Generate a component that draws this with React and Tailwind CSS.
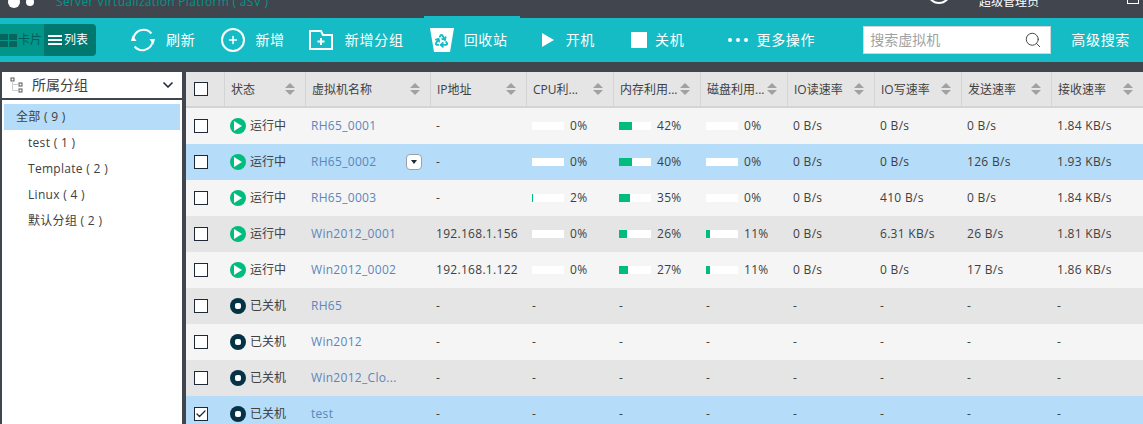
import { Check, ChevronDown, Plus, Recycle, Search } from "lucide-react";

const font = { fontFamily: '"Open Sans","Noto Sans CJK SC",sans-serif' };

const cols = "grid grid-cols-[38px_81px_125px_96px_87px_87px_87px_87px_87px_90px_1fr]";

const headers = ["状态", "虚拟机名称", "IP地址", "CPU利...", "内存利用...", "磁盘利用...", "IO读速率", "IO写速率", "发送速率", "接收速率"];

const groups = ["test ( 1 )", "Template ( 2 )", "Linux ( 4 )", "默认分组 ( 2 )"];

const rows = [
  { name: "RH65_0001", on: true, ip: "-", cpu: 0, mem: 42, disk: 0, r: "0 B/s", w: "0 B/s", tx: "0 B/s", rx: "1.84 KB/s", bg: "bg-neutral-100" },
  { name: "RH65_0002", on: true, ip: "-", cpu: 0, mem: 40, disk: 0, r: "0 B/s", w: "0 B/s", tx: "126 B/s", rx: "1.93 KB/s", bg: "bg-[#b5dcf8]", menu: true },
  { name: "RH65_0003", on: true, ip: "-", cpu: 2, mem: 35, disk: 0, r: "0 B/s", w: "410 B/s", tx: "0 B/s", rx: "1.84 KB/s", bg: "bg-neutral-100" },
  { name: "Win2012_0001", on: true, ip: "192.168.1.156", cpu: 0, mem: 26, disk: 11, r: "0 B/s", w: "6.31 KB/s", tx: "26 B/s", rx: "1.81 KB/s", bg: "bg-neutral-200" },
  { name: "Win2012_0002", on: true, ip: "192.168.1.122", cpu: 0, mem: 27, disk: 11, r: "0 B/s", w: "0 B/s", tx: "17 B/s", rx: "1.86 KB/s", bg: "bg-neutral-100" },
  { name: "RH65", bg: "bg-neutral-200" },
  { name: "Win2012", bg: "bg-neutral-100" },
  { name: "Win2012_Clo...", bg: "bg-neutral-200" },
  { name: "test", bg: "bg-[#b5dcf8]", checked: true },
];

const RefreshIcon = () => (
  <svg width="26" height="26" viewBox="0 0 28 28" fill="none" stroke="white" strokeWidth="2.2">
    <path d="M4 11 A11 11 0 0 1 23 7" />
    <path d="M24 17 A11 11 0 0 1 5 21" />
    <path d="M1 15 L7 15 L3 9 Z" fill="white" strokeWidth="0" />
    <path d="M27 13 L21 13 L25 19 Z" fill="white" strokeWidth="0" />
  </svg>
);

const FolderPlus = () => (
  <svg width="24" height="22" viewBox="0 0 24 22" fill="none" stroke="white" strokeWidth="2">
    <path d="M1 20 V2 H12 L14 6 H23 V20 Z" />
    <path d="M12 9 V16 M8.5 12.5 H15.5" />
  </svg>
);

const BinIcon = () => (
  <div className="relative flex h-6 w-6 items-center justify-center">
    <svg className="absolute inset-0" width="24" height="24" viewBox="0 0 24 24">
      <path d="M0 0 H24 L20 24 H4 Z" fill="white" />
    </svg>
    <Recycle className="relative text-[#16bcc5]" size={15} strokeWidth={3} />
  </div>
);

const Sort = () => (
  <svg width="10" height="12" viewBox="0 0 10 12" className="shrink-0 fill-neutral-400">
    <path d="M5 0 L10 5 H0 Z" />
    <path d="M5 12 L10 7 H0 Z" />
  </svg>
);

const Box = ({ checked }) => (
  <div className="flex h-3.5 w-3.5 items-center justify-center border border-gray-800 bg-white">
    {checked && <Check size={14} strokeWidth={2.5} className="text-gray-800" />}
  </div>
);

const Bar = ({ value }) => (
  <div className="flex items-center gap-1.5">
    <div className="h-2 w-8 bg-white">
      <div className="h-full bg-emerald-500" style={{ width: `${value}%` }} />
    </div>
    <span>{value}%</span>
  </div>
);

const Dash = () => <div className="pl-1.5">-</div>;

const Row = ({ row }) => (
  <div className={`${cols} h-9 items-center text-xs tracking-wide text-neutral-700 ${row.bg}`}>
    <div className="flex justify-center pr-2">
      <Box checked={row.checked} />
    </div>
    <div className="flex items-center gap-1 pl-1.5 tracking-normal">
      {row.on ? (
        <div className="flex h-4 w-4 items-center justify-center rounded-full bg-emerald-500">
          <svg width="8" height="10" viewBox="0 0 8 10" fill="white"><path d="M0 0 L8 5 L0 10 Z" /></svg>
        </div>
      ) : (
        <div className="flex h-4 w-4 items-center justify-center rounded-full bg-cyan-950">
          <div className="h-1.5 w-1.5 rounded-xs bg-white" />
        </div>
      )}
      <span>{row.on ? "运行中" : "已关机"}</span>
    </div>
    <div className="flex items-center justify-between pl-1.5 pr-2 text-[#5b86bd]">
      <span>{row.name}</span>
      {row.menu && (
        <div className="flex h-4 w-4 items-center justify-center rounded-sm border border-gray-400 bg-white">
          <svg width="6" height="4" viewBox="0 0 6 4" className="fill-gray-800"><path d="M0 0 H6 L3 4 Z" /></svg>
        </div>
      )}
    </div>
    {row.on ? (
      <>
        <div className="pl-1.5">{row.ip}</div>
        <div className="pl-1.5"><Bar value={row.cpu} /></div>
        <div className="pl-1.5"><Bar value={row.mem} /></div>
        <div className="pl-1.5"><Bar value={row.disk} /></div>
        <div className="pl-1.5">{row.r}</div>
        <div className="pl-1.5">{row.w}</div>
        <div className="pl-1.5">{row.tx}</div>
        <div className="pl-1.5">{row.rx}</div>
      </>
    ) : (
      <>
        <Dash /><Dash /><Dash /><Dash /><Dash /><Dash /><Dash /><Dash />
      </>
    )}
  </div>
);

const Tool = ({ icon, label, className }) => (
  <div className={`flex items-center ${className}`}>
    {icon}
    <span className="text-sm tracking-wider text-white">{label}</span>
  </div>
);

export default function App() {
  return (
    <div className="flex h-screen flex-col overflow-hidden bg-[#40454e]" style={font}>
      {/* top bar, cut off by the window */}
      <div className="relative h-4 shrink-0 overflow-hidden">
        <div className="absolute -top-1 left-2 h-3 w-3 rounded-full bg-white" />
        <div className="absolute -top-0.5 left-6.5 h-2 w-2 rounded-full bg-white" />
        <div className="absolute -top-1.5 left-14 text-xs tracking-wide text-teal-600">Server Virtualization Platform ( aSV )</div>
        <div className="absolute -top-5 right-48 h-6 w-6 rounded-full border-2 border-white" />
        <div className="absolute -top-1.5 right-26 text-xs text-white">超级管理员</div>
        <div className="absolute -top-2 right-1 h-3 w-3 border border-white" />
      </div>

      {/* toolbar */}
      <div className="mt-0.5 flex h-11 shrink-0 items-center bg-[#16bcc5]">
        <div className="flex h-8 w-24 items-center overflow-hidden rounded-r-sm bg-teal-700 text-xs">
          <div className="flex h-full w-11 items-center gap-px bg-teal-600 text-teal-800">
            <div className="grid grid-cols-2 gap-px">
              <div className="h-1.5 w-2 bg-teal-900/70" />
              <div className="h-1.5 w-2 bg-teal-900/70" />
              <div className="h-1.5 w-2 bg-teal-900/70" />
              <div className="h-1.5 w-2 bg-teal-900/70" />
            </div>
            <span>卡片</span>
          </div>
          <div className="flex items-center gap-0.5 pl-1 text-white">
            <div className="flex flex-col gap-0.5">
              <div className="h-0.5 w-3.5 bg-white" />
              <div className="h-0.5 w-3.5 bg-white" />
              <div className="h-0.5 w-3.5 bg-white" />
            </div>
            <span className="text-xs">列表</span>
          </div>
        </div>

        <Tool icon={<RefreshIcon />} label="刷新" className="ml-8.5 gap-2.5" />
        <Tool icon={<div className="flex h-6 w-6 items-center justify-center rounded-full border-2 border-white"><Plus size={12} strokeWidth={3} className="text-white" /></div>} label="新增" className="ml-6.5 gap-2.5" />
        <Tool icon={<FolderPlus />} label="新增分组" className="ml-6 gap-3" />
        <div className="relative ml-5 flex h-full w-24 items-center gap-2.5 pl-1.5">
          <div className="absolute -top-0.5 left-0 h-0.5 w-full bg-[#16bcc5]" />
          <BinIcon />
          <span className="text-sm tracking-wider text-white">回收站</span>
        </div>
        <Tool icon={<svg width="12" height="14" viewBox="0 0 12 14" fill="white"><path d="M0 0 L12 7 L0 14 Z" /></svg>} label="开机" className="ml-5.5 gap-3" />
        <Tool icon={<div className="h-4 w-4 bg-white" />} label="关机" className="ml-9 gap-2" />
        <Tool icon={<div className="flex gap-1"><div className="h-1 w-1 rounded-full bg-white" /><div className="h-1 w-1 rounded-full bg-white" /><div className="h-1 w-1 rounded-full bg-white" /></div>} label="更多操作" className="ml-11 gap-2" />

        <div className="ml-12 flex h-7 w-47 items-center justify-between border border-gray-300 bg-white pl-1.5 pr-2 text-sm text-neutral-400">
          <span>搜索虚拟机</span>
          <Search size={18} strokeWidth={1.25} className="text-neutral-700" />
        </div>
        <span className="ml-5 text-sm tracking-wider text-white">高级搜索</span>
      </div>

      <div className="mt-2.5 flex min-h-0 flex-1 gap-1 pl-0.5">
        {/* group tree */}
        <div className="flex w-45 shrink-0 flex-col gap-0.5">
          <div className="flex h-6.5 shrink-0 items-center justify-between bg-white pl-2 pr-1.5">
            <div className="flex items-center gap-2 text-sm text-neutral-700">
              <svg width="14" height="16" viewBox="0 0 14 16" fill="none" stroke="#555" strokeWidth="1">
                <rect x="1" y="1" width="3" height="3" />
                <rect x="9" y="6" width="3" height="3" />
                <rect x="9" y="12" width="3" height="3" />
                <path d="M2.5 4 V13.5 H9 M2.5 7.5 H9" stroke="#ccc" />
              </svg>
              <span>所属分组</span>
            </div>
            <ChevronDown size={16} strokeWidth={2.5} className="text-gray-800" />
          </div>
          <div className="flex-1 bg-white p-0.5 pt-1 text-xs text-neutral-700">
            <div className="flex h-6.5 items-center bg-[#b5dcf8] pl-3 tracking-wide">全部 ( 9 )</div>
            {groups.map((g) => (
              <div key={g} className="flex h-6.5 items-center pl-6 tracking-wide">{g}</div>
            ))}
          </div>
        </div>

        {/* vm table */}
        <div className="min-w-0 flex-1">
          <div className={`${cols} h-9 items-center border-b-2 border-neutral-300 bg-neutral-200 text-xs text-neutral-700`}>
            <div className="flex justify-center pr-2"><Box /></div>
            {headers.map((h) => (
              <div key={h} className="flex h-full items-center justify-between border-l border-neutral-300 pl-1.5 pr-2.5">
                <span className="whitespace-nowrap pt-0.5">{h}</span>
                <Sort />
              </div>
            ))}
          </div>
          {rows.map((row) => (
            <Row key={row.name} row={row} />
          ))}
        </div>
      </div>
    </div>
  );
}
